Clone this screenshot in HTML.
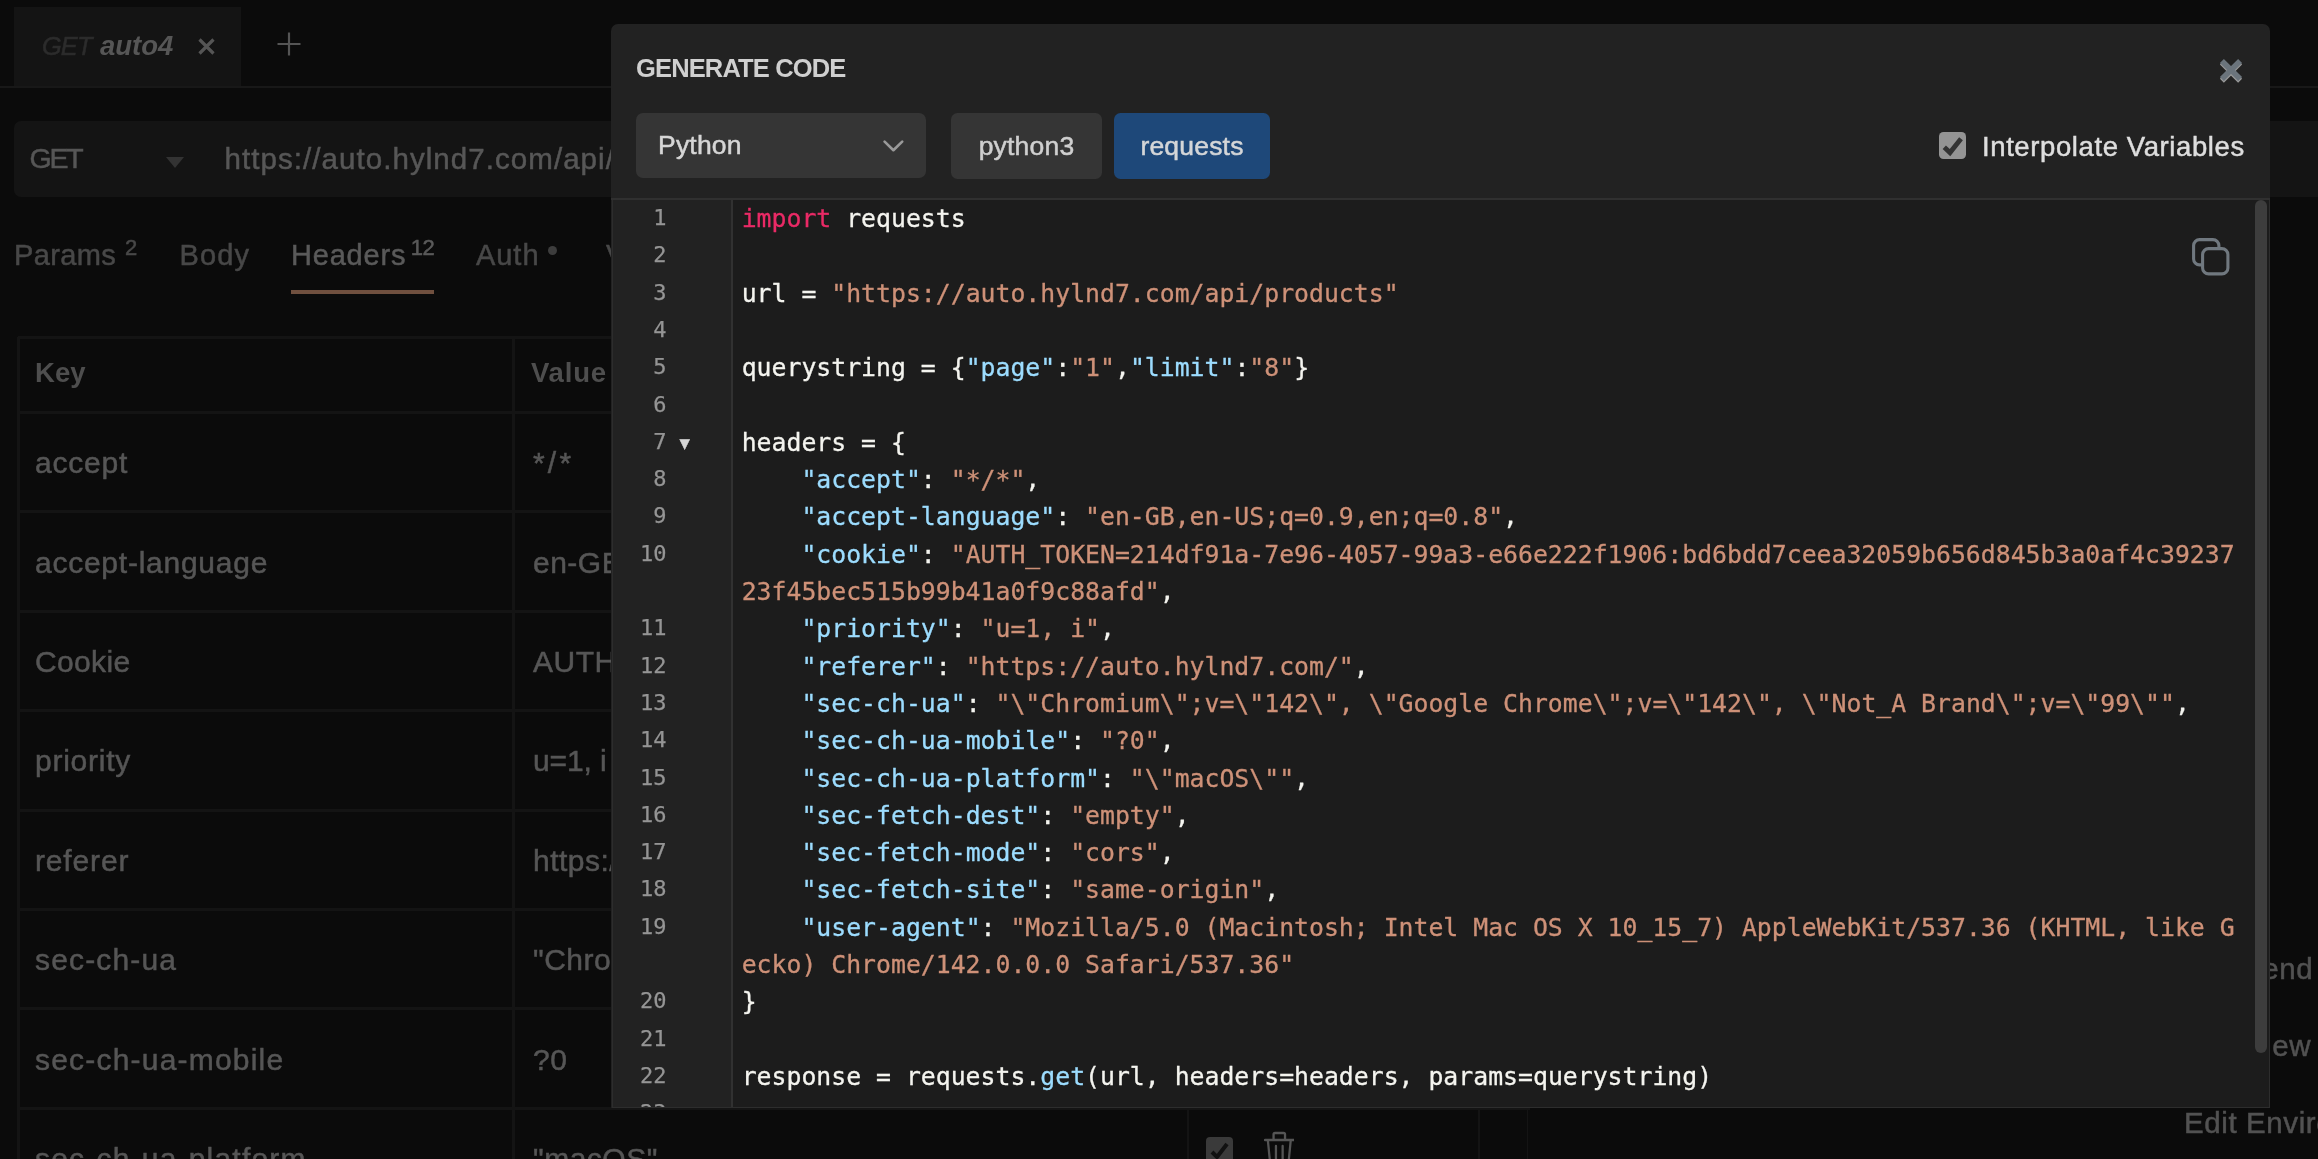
<!DOCTYPE html>
<html lang="en"><head><meta charset="utf-8"><title>Generate Code</title>
<style>
*{box-sizing:border-box;margin:0;padding:0}
html,body{width:2318px;height:1159px;overflow:hidden;background:#0b0b0b}
body{position:relative;font-family:"Liberation Sans",Arial,sans-serif;color:#4d4d4d;-webkit-font-smoothing:antialiased}
#root{position:absolute;left:0;top:0;width:2318px;height:1159px;will-change:transform}
.t{-webkit-text-stroke:.5px currentColor}
.abs{position:absolute}
/* background app (dimmed) */
#tab{left:14px;top:7px;width:227px;height:80px;background:#141414}
#tab .m{position:absolute;left:28px;top:24px;font-size:25.4px;font-style:italic;color:#2c2c2c;line-height:30px;white-space:nowrap;letter-spacing:-.9px;-webkit-text-stroke:.5px #2c2c2c}
#tab .n{position:absolute;left:86px;top:22px;font-size:27.5px;font-style:italic;color:#565656;line-height:34px;white-space:nowrap;font-weight:bold}
#tabline{left:0;top:86px;width:2318px;height:2px;background:#181818}
#urlbar{left:14px;top:121px;width:2400px;height:76px;background:#141414;border-radius:7px}
#method{left:29.5px;top:139.5px;font-size:28.5px;line-height:36px;color:#565656;letter-spacing:-2.2px}
#caret{left:166px;top:157px;width:0;height:0;border-left:9.5px solid transparent;border-right:9.5px solid transparent;border-top:11px solid #333}
#url{left:224.5px;top:141.3px;font-size:29.5px;line-height:36px;color:#575757;white-space:nowrap;letter-spacing:1.06px}
.rt{top:237px;font-size:29px;line-height:36px;color:#484848;white-space:nowrap;letter-spacing:.3px}
.rt sup{font-size:22px;position:relative;top:1px;vertical-align:top;line-height:20px;margin-left:9px;letter-spacing:0}
#underline{left:291px;top:290px;width:143px;height:4px;background:#70503f}
/* table */
.hline{position:absolute;left:18px;width:1512px;height:3px;background:#141414}
.vline{position:absolute;top:337px;width:3px;height:830px;background:#141414}
.th{position:absolute;top:355px;font-size:27.5px;font-weight:bold;line-height:36px;color:#4e4e4e;letter-spacing:.1px}
.tk,.tv{position:absolute;height:99px;line-height:99px;font-size:30px;color:#565656;white-space:nowrap;letter-spacing:.5px}
.tk{left:35px}.tv{left:533px}
.side{position:absolute;font-size:29.5px;line-height:36px;color:#525252;white-space:nowrap;letter-spacing:.6px}
/* modal */
#modal{left:611px;top:24px;width:1659px;height:1084px;background:#222222;border-radius:7px 7px 0 0;overflow:hidden}
#title{left:25px;top:27px;font-size:25.5px;font-weight:bold;line-height:34px;color:#cfcfcf;white-space:nowrap;letter-spacing:-.85px}
#sel{left:25px;top:89.2px;width:290px;height:65.3px;background:#353535;border-radius:7px}
#sel span{position:absolute;left:22px;top:14px;font-size:26.5px;line-height:36px;color:#d6d6d6;letter-spacing:.2px}
.btn{position:absolute;top:89.2px;height:65.4px;border-radius:6.5px;font-size:26.5px;line-height:66.4px;text-align:center;color:#cfcfcf;letter-spacing:.2px}
#b1{left:340px;width:151px;background:#353535}
#b2{left:503px;width:156px;background:#1e4879;color:#d4d6d8}
#chk{left:1328px;top:108px;width:27px;height:27px;border-radius:4.5px;background:#949494}
#ilabel{left:1371px;top:104.5px;font-size:27.5px;line-height:36px;color:#dedede;white-space:nowrap;letter-spacing:.6px}
#hdrline{left:0;top:174px;width:1659px;height:2px;background:#303030}
#editor{left:0.5px;top:176px;width:1658.5px;height:908px;background:#1c1c1c;overflow:hidden;border:1px solid #2d2d2d;border-top:none}
#gutter{left:0;top:0;width:120px;height:907px;background:#222222;border-right:2px solid #313131}
.ln{position:absolute;left:0;width:54px;text-align:right;height:37.3px;line-height:37.3px;font-family:"DejaVu Sans Mono","Liberation Mono",monospace;font-size:22px;color:#959595;white-space:nowrap;-webkit-text-stroke:.25px currentColor}
.ln .fold{position:absolute;left:67px;top:2px;font-size:13.5px;color:#d6d6d6;font-family:"DejaVu Sans",sans-serif}
.cl{position:absolute;left:129.2px;height:37.3px;line-height:37.3px;font-family:"DejaVu Sans Mono","Liberation Mono",monospace;font-size:24.8px;white-space:pre;color:#f4f4ef;-webkit-text-stroke:.3px currentColor}
.w{color:#f4f4ef}.s{color:#ce9178}.k{color:#ea2a66}.b{color:#9cdcfe}
#nums{left:0px;top:-1px;width:120px;height:907px}
#code{left:0;top:0;width:1658px;height:907px}
#sb{left:1642px;top:0;width:12.5px;height:853px;border-radius:7px;background:#3d3d3d}
</style></head><body><div id="root">
<!-- dimmed app behind modal -->
<div id="tab" class="abs"><span class="m">GET</span><span class="n">auto4</span>
<svg class="abs" style="left:184px;top:31px" width="17" height="17" viewBox="0 0 17 17"><path d="M1.5 1.5L15.5 15.5M15.5 1.5L1.5 15.5" stroke="#555" stroke-width="3.2" fill="none"/></svg></div>
<svg class="abs" style="left:277px;top:32px" width="24" height="24" viewBox="0 0 24 24"><path d="M12 0.5V23.5M0.5 12H23.5" stroke="#555" stroke-width="2.2" fill="none"/></svg>
<div id="tabline" class="abs"></div>
<div id="urlbar" class="abs"></div>
<div id="method" class="abs t">GET</div><div id="caret" class="abs"></div>
<div id="url" class="abs t">https://auto.hylnd7.com/api/products?page=1&amp;limit=8</div>
<div class="abs rt t" style="left:14px;letter-spacing:.35px">Params<sup>2</sup></div>
<div class="abs rt t" style="left:179.5px;letter-spacing:1.1px">Body</div>
<div class="abs rt t" style="left:291px;color:#5a5a5a;letter-spacing:.8px">Headers<sup style="margin-left:4.5px;letter-spacing:-.5px">12</sup></div>
<div class="abs rt t" style="left:476px;letter-spacing:.95px">Auth</div>
<div class="abs" style="left:548px;top:246px;width:9px;height:9px;border-radius:50%;background:#3d3d3d"></div>
<div class="abs rt t" style="left:606px">Vars</div>
<div id="underline" class="abs"></div>
<div class="hline" style="top:336px"></div>
<div class="vline" style="left:17px"></div><div class="vline" style="left:512px"></div>
<div class="vline" style="left:1187px;width:2px"></div><div class="vline" style="left:1478px;width:2px"></div><div class="vline" style="left:1527px;width:1px"></div>
<div class="th" style="left:35px">Key</div><div class="th" style="left:531px;letter-spacing:.8px">Value</div>
<div class="hline" style="top:411.0px"></div><div class="tk t" style="top:413.3px;letter-spacing:0.80px">accept</div><div class="tv t" style="top:413.3px;letter-spacing:3.20px">*/*</div><div class="hline" style="top:510.4px"></div><div class="tk t" style="top:512.7px;letter-spacing:0.75px">accept-language</div><div class="tv t" style="top:512.7px;letter-spacing:0.50px">en-GB,en-US;q=0.9,en;q=0.8</div><div class="hline" style="top:609.7px"></div><div class="tk t" style="top:612.0px;letter-spacing:0.35px">Cookie</div><div class="tv t" style="top:612.0px;letter-spacing:0.50px">AUTH_TOKEN=214df91a-7e96-4057-99a3</div><div class="hline" style="top:709.1px"></div><div class="tk t" style="top:711.4px;letter-spacing:0.75px">priority</div><div class="tv t" style="top:711.4px;letter-spacing:-0.10px">u=1, i</div><div class="hline" style="top:808.5px"></div><div class="tk t" style="top:810.8px;letter-spacing:0.85px">referer</div><div class="tv t" style="top:810.8px;letter-spacing:0.50px">https://auto.hylnd7.com/</div><div class="hline" style="top:907.9px"></div><div class="tk t" style="top:910.1px;letter-spacing:1.15px">sec-ch-ua</div><div class="tv t" style="top:910.1px;letter-spacing:0.50px">"Chromium";v="142", "Google Chrome";v="142"</div><div class="hline" style="top:1007.2px"></div><div class="tk t" style="top:1009.5px;letter-spacing:1.20px">sec-ch-ua-mobile</div><div class="tv t" style="top:1009.5px;letter-spacing:0.50px">?0</div><div class="hline" style="top:1106.6px"></div><div class="tk t" style="top:1108.9px;letter-spacing:1.20px">sec-ch-ua-platform</div><div class="tv t" style="top:1108.9px;letter-spacing:0.50px">"macOS"</div>
<div class="abs" style="left:1206px;top:1137px;width:27px;height:27px;border-radius:4px;background:#3a3a3a"></div>
<svg class="abs" style="left:1206px;top:1137px" width="27" height="27" viewBox="0 0 27 27"><path d="M6 15L11 20L21 7" stroke="#111" stroke-width="4" fill="none"/></svg>
<svg class="abs" style="left:1263.7px;top:1131px" width="30.6" height="34" viewBox="0 0 32 34" preserveAspectRatio="none"><path d="M1 9H31M10 9V3.5Q10 2 11.5 2H20.5Q22 2 22 3.5V9M4 9L6.5 33H25.5L28 9M12.5 15V28M19.5 15V28" stroke="#555" stroke-width="2.4" fill="none" stroke-linecap="round" stroke-linejoin="round"/></svg>
<div class="side t" style="left:2242px;top:950.5px">Send</div>
<div class="side t" style="left:2202px;top:1027.5px">Preview</div>
<div class="side t" style="left:2184px;top:1104.5px">Edit Environment</div>

<!-- modal -->
<div id="modal" class="abs">
 <div id="title" class="abs">GENERATE CODE</div>
 <svg class="abs" style="left:1605.7px;top:31.5px" width="28" height="30" viewBox="0 0 28 30"><path d="M4.9 6.5L23.1 24.7M23.1 6.5L4.9 24.7" stroke="#9a9a9a" stroke-width="5.6" fill="none"/><path d="M4.9 4.9L23.1 23.1M23.1 4.9L4.9 23.1" stroke="#6b747c" stroke-width="5.6" fill="none"/></svg>
 <div id="sel" class="abs"><span class="t">Python</span>
  <svg class="abs" style="left:246.7px;top:27.3px" width="21" height="13" viewBox="0 0 21 13"><path d="M1.6 1.6L10.4 10.2L19.2 1.6" stroke="#9a9a9a" stroke-width="2.6" fill="none" stroke-linecap="round" stroke-linejoin="round"/></svg></div>
 <div id="b1" class="btn t">python3</div><div id="b2" class="btn t">requests</div>
 <div id="chk" class="abs"></div>
 <svg class="abs" style="left:1328px;top:108px" width="27" height="27" viewBox="0 0 27 27"><path d="M5.3 15.2L11 20.6L22 6.8" stroke="#333" stroke-width="4.8" fill="none"/></svg>
 <div id="ilabel" class="abs t">Interpolate Variables</div>
 <div id="hdrline" class="abs"></div>
 <div id="editor" class="abs">
  <div id="code" class="abs"><div class="cl" style="top:0.00px"><span class="k">import</span><span class="w"> requests</span></div>
<div class="cl" style="top:37.30px"></div>
<div class="cl" style="top:74.60px"><span class="w">url = </span><span class="s">"https://auto.hylnd7.com/api/products"</span></div>
<div class="cl" style="top:111.90px"></div>
<div class="cl" style="top:149.20px"><span class="w">querystring = {</span><span class="b">"page"</span><span class="w">:</span><span class="s">"1"</span><span class="w">,</span><span class="b">"limit"</span><span class="w">:</span><span class="s">"8"</span><span class="w">}</span></div>
<div class="cl" style="top:186.50px"></div>
<div class="cl" style="top:223.80px"><span class="w">headers = {</span></div>
<div class="cl" style="top:261.10px"><span class="w">    </span><span class="b">"accept"</span><span class="w">: </span><span class="s">"*/*"</span><span class="w">,</span></div>
<div class="cl" style="top:298.40px"><span class="w">    </span><span class="b">"accept-language"</span><span class="w">: </span><span class="s">"en-GB,en-US;q=0.9,en;q=0.8"</span><span class="w">,</span></div>
<div class="cl" style="top:335.70px"><span class="w">    </span><span class="b">"cookie"</span><span class="w">: </span><span class="s">"AUTH_TOKEN=214df91a-7e96-4057-99a3-e66e222f1906:bd6bdd7ceea32059b656d845b3a0af4c39237</span></div>
<div class="cl" style="top:373.00px"><span class="s">23f45bec515b99b41a0f9c88afd"</span><span class="w">,</span></div>
<div class="cl" style="top:410.30px"><span class="w">    </span><span class="b">"priority"</span><span class="w">: </span><span class="s">"u=1, i"</span><span class="w">,</span></div>
<div class="cl" style="top:447.60px"><span class="w">    </span><span class="b">"referer"</span><span class="w">: </span><span class="s">"https://auto.hylnd7.com/"</span><span class="w">,</span></div>
<div class="cl" style="top:484.90px"><span class="w">    </span><span class="b">"sec-ch-ua"</span><span class="w">: </span><span class="s">"\"Chromium\";v=\"142\", \"Google Chrome\";v=\"142\", \"Not_A Brand\";v=\"99\""</span><span class="w">,</span></div>
<div class="cl" style="top:522.20px"><span class="w">    </span><span class="b">"sec-ch-ua-mobile"</span><span class="w">: </span><span class="s">"?0"</span><span class="w">,</span></div>
<div class="cl" style="top:559.50px"><span class="w">    </span><span class="b">"sec-ch-ua-platform"</span><span class="w">: </span><span class="s">"\"macOS\""</span><span class="w">,</span></div>
<div class="cl" style="top:596.80px"><span class="w">    </span><span class="b">"sec-fetch-dest"</span><span class="w">: </span><span class="s">"empty"</span><span class="w">,</span></div>
<div class="cl" style="top:634.10px"><span class="w">    </span><span class="b">"sec-fetch-mode"</span><span class="w">: </span><span class="s">"cors"</span><span class="w">,</span></div>
<div class="cl" style="top:671.40px"><span class="w">    </span><span class="b">"sec-fetch-site"</span><span class="w">: </span><span class="s">"same-origin"</span><span class="w">,</span></div>
<div class="cl" style="top:708.70px"><span class="w">    </span><span class="b">"user-agent"</span><span class="w">: </span><span class="s">"Mozilla/5.0 (Macintosh; Intel Mac OS X 10_15_7) AppleWebKit/537.36 (KHTML, like G</span></div>
<div class="cl" style="top:746.00px"><span class="s">ecko) Chrome/142.0.0.0 Safari/537.36"</span></div>
<div class="cl" style="top:783.30px"><span class="w">}</span></div>
<div class="cl" style="top:820.60px"></div>
<div class="cl" style="top:857.90px"><span class="w">response = requests.</span><span class="b">get</span><span class="w">(url, headers=headers, params=querystring)</span></div>
<div class="cl" style="top:895.20px"></div></div>
  <div id="gutter" class="abs"><div id="nums" class="abs"><div class="ln" style="top:0.00px">1</div>
<div class="ln" style="top:37.30px">2</div>
<div class="ln" style="top:74.60px">3</div>
<div class="ln" style="top:111.90px">4</div>
<div class="ln" style="top:149.20px">5</div>
<div class="ln" style="top:186.50px">6</div>
<div class="ln" style="top:223.80px">7<span class="fold">&#9660;</span></div>
<div class="ln" style="top:261.10px">8</div>
<div class="ln" style="top:298.40px">9</div>
<div class="ln" style="top:335.70px">10</div>
<div class="ln" style="top:410.30px">11</div>
<div class="ln" style="top:447.60px">12</div>
<div class="ln" style="top:484.90px">13</div>
<div class="ln" style="top:522.20px">14</div>
<div class="ln" style="top:559.50px">15</div>
<div class="ln" style="top:596.80px">16</div>
<div class="ln" style="top:634.10px">17</div>
<div class="ln" style="top:671.40px">18</div>
<div class="ln" style="top:708.70px">19</div>
<div class="ln" style="top:783.30px">20</div>
<div class="ln" style="top:820.60px">21</div>
<div class="ln" style="top:857.90px">22</div>
<div class="ln" style="top:895.20px">23</div></div></div>
  <svg class="abs" style="left:1579px;top:38px" width="38" height="38" viewBox="0 0 38 38"><rect x="1.6" y="1.6" width="25.3" height="25.3" rx="6" fill="none" stroke="#70787f" stroke-width="3.1"/><rect x="10.6" y="10.6" width="25.3" height="25.3" rx="6" fill="#1c1c1c" stroke="#70787f" stroke-width="3.1"/></svg>
  <div id="sb" class="abs"></div>
 </div>
</div>
</div></body></html>
